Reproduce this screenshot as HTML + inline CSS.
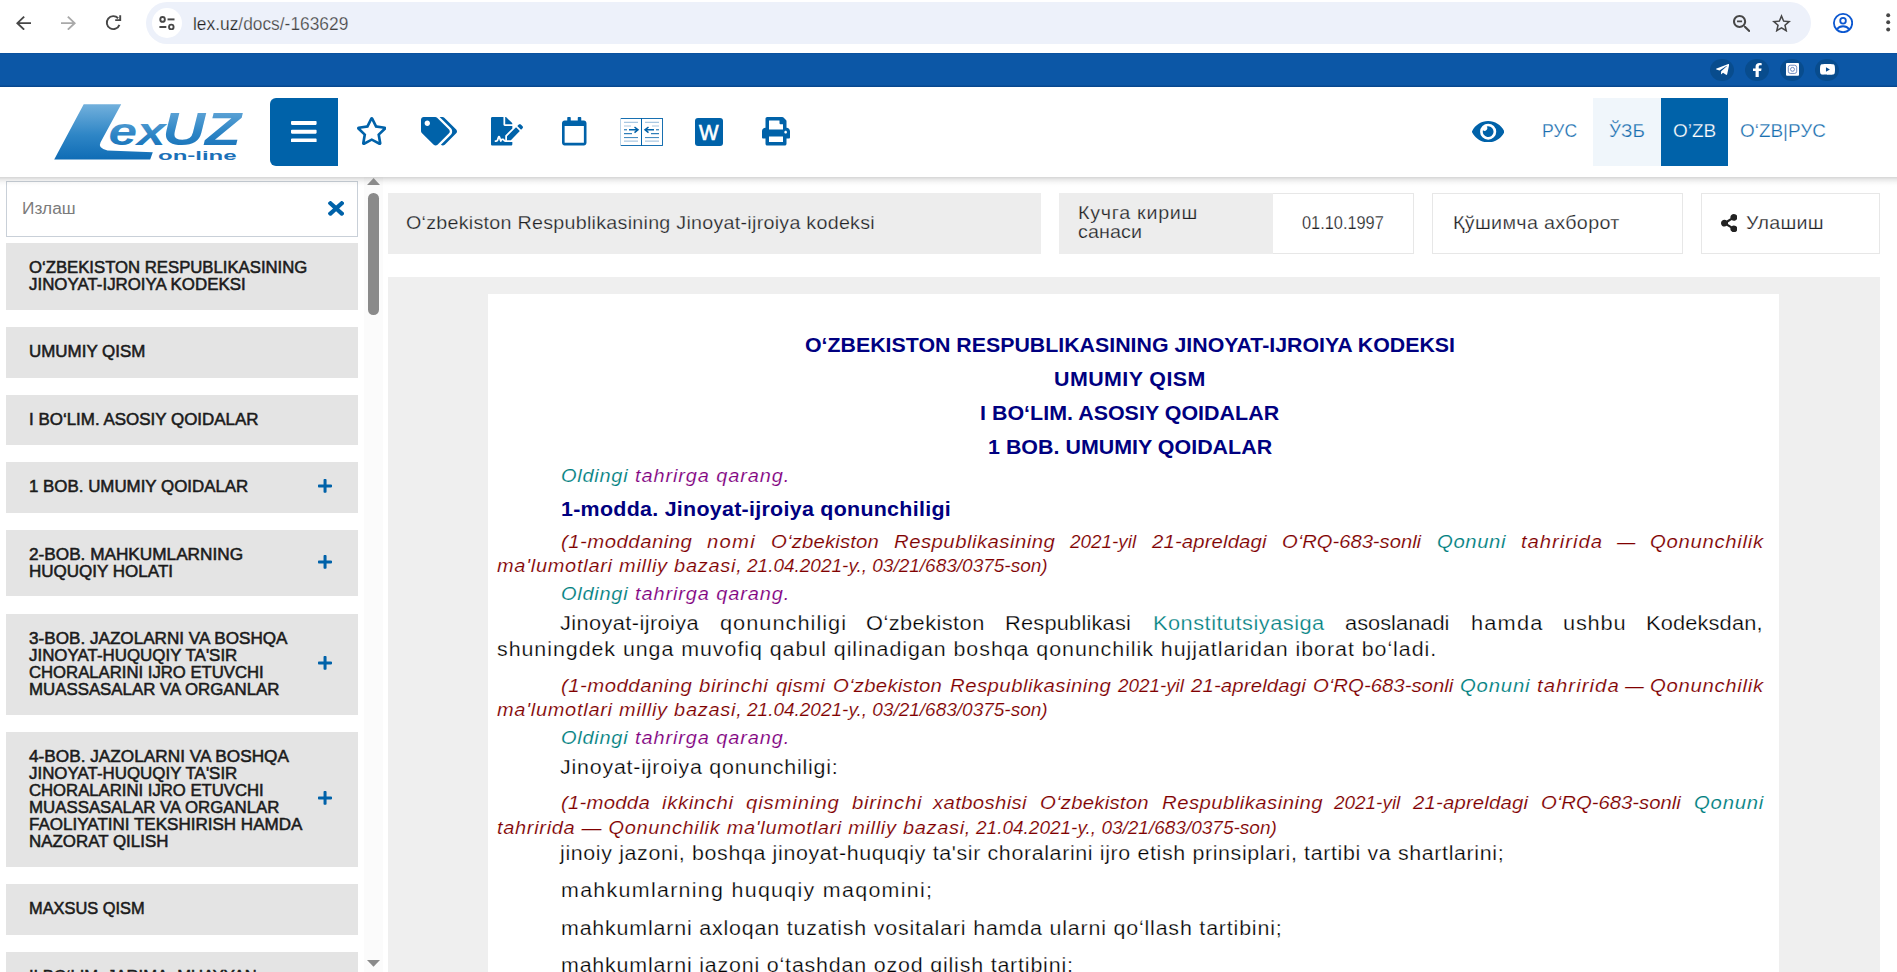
<!DOCTYPE html>
<html lang="uz"><head><meta charset="utf-8"><title>Oʻzbekiston Respublikasining Jinoyat-ijroiya kodeksi</title>
<style>
html,body{margin:0;padding:0;background:#fff;overflow:hidden}
body{width:1897px;height:972px;font-family:"Liberation Sans","DejaVu Sans",sans-serif}
#app{position:relative;width:1897px;height:972px;overflow:hidden;background:#fff}
.a{position:absolute;display:block}
.t{position:absolute;display:block;white-space:pre;transform-origin:0 0;margin:0;padding:0;text-decoration:none}
</style></head><body>
<div id="app">
<div class="browser-chrome">
<div class="a" style="left:0px;top:0px;width:1897px;height:53px;background:#fff;"></div>
<div class="a" style="left:146px;top:2px;width:1664.5px;height:42px;background:#edf1fa;border-radius:21px"></div>
<svg class="a" style="left:16.2px;top:15.5px;width:15px;height:14.3px;" viewBox="4 4 16 16" preserveAspectRatio="none"><path fill="#474747" d="M20 11H7.83l5.59-5.59L12 4l-8 8 8 8 1.41-1.41L7.83 13H20v-2z"/></svg>
<svg class="a" style="left:61.1px;top:15.5px;width:15px;height:14.3px;" viewBox="4 4 16 16" preserveAspectRatio="none"><path fill="#a9a9a9" d="M12 4l-1.41 1.41L16.17 11H4v2h12.17l-5.58 5.59L12 20l8-8z"/></svg>
<svg class="a" style="left:104px;top:13px;width:20px;height:20px;" viewBox="104 13 20 20" preserveAspectRatio="none"><g fill="none" stroke="#474747" stroke-width="1.900"><path d="M118.130 18.250A6.500 6.500 0 1 0 119.410 24.820"/><path d="M120.200 15.300V20.100H115.200"/></g></svg>
<div class="a" style="left:152.2px;top:7.9px;width:30px;height:30px;background:#fff;border-radius:50%"></div>
<svg class="a" style="left:159.3px;top:15.8px;width:15.9px;height:14.4px;" viewBox="0 0 16 14" preserveAspectRatio="none"><g fill="none" stroke="#474747" stroke-width="1.9"><circle cx="3.6" cy="3.3" r="2.3"/><path d="M8.6 3.3H15.6"/><circle cx="12.4" cy="10.7" r="2.3"/><path d="M0.4 10.7H7.4"/></g></svg>
<span class='t' style='left:193px;top:12.00px;font:normal 400 17.8px "Liberation Sans", "DejaVu Sans", sans-serif;letter-spacing:0.0px;-webkit-text-stroke:0.25px #edf1fa;line-height:24px;color:#1f1f1f;transform:scaleX(0.9758)'>lex.uz<span style="color:#424242">/docs/-163629</span></span>
<svg class="a" style="left:1732.8px;top:14.7px;width:17.7px;height:17.4px;" viewBox="3 3 17.5 17.5" preserveAspectRatio="none"><path fill="#474747" d="M15.5 14h-.79l-.28-.27C15.41 12.59 16 11.11 16 9.5 16 5.91 13.09 3 9.5 3S3 5.910 3 9.500 5.910 16 9.500 16c1.610 0 3.090-.590 4.230-1.570l.270.280v.790l5 4.990L20.490 19l-4.990-5zm-6 0C7.010 14 5 11.990 5 9.500S7.010 5 9.500 5 14 7.010 14 9.500 11.990 14 9.500 14zM7 8.600h5v1.800H7z"/></svg>
<svg class="a" style="left:1772px;top:13.6px;width:19px;height:18.3px;" viewBox="2 2 20 19" preserveAspectRatio="none"><path fill="#474747" d="M22 9.24l-7.19-.62L12 2 9.19 8.63 2 9.24l5.46 4.73L5.82 21 12 17.27 18.18 21l-1.63-7.03L22 9.24zM12 15.4l-3.76 2.27 1-4.28-3.32-2.88 4.38-.38L12 6.1l1.71 4.04 4.38.38-3.32 2.88 1 4.28L12 15.4z"/></svg>
<svg class="a" style="left:1833.4px;top:12.5px;width:20.1px;height:20.1px;" viewBox="0 0 20 20" preserveAspectRatio="none"><g fill="none" stroke="#0b57d0" stroke-width="1.8"><circle cx="10" cy="10" r="9.100"/><circle cx="10" cy="7.700" r="2.800"/><path d="M3.900 16.200c1.500-2.100 3.700-3 6.100-3s4.600.900 6.100 3"/></g></svg>
<svg class="a" style="left:1886.3px;top:13px;width:4.4px;height:18.6px;" viewBox="0 0 4.400 18.600" preserveAspectRatio="none"><g fill="#474747"><circle cx="2.200" cy="2.200" r="2"/><circle cx="2.200" cy="9.300" r="2"/><circle cx="2.200" cy="16.400" r="2"/></g></svg>
</div>
<div class="topbar">
<div class="a" style="left:0px;top:53px;width:1897px;height:33.7px;background:linear-gradient(#0a4f9b,#0c57a6 1.500px,#0c57a6 31.700px,#07468c 33.700px);"></div>
<div class="a" style="left:1710px;top:58.9px;width:24px;height:22.2px;background:#084c8d;border-radius:50%"></div>
<div class="a" style="left:1745px;top:58.9px;width:24px;height:22.2px;background:#084c8d;border-radius:50%"></div>
<div class="a" style="left:1780px;top:58.9px;width:24px;height:22.2px;background:#084c8d;border-radius:50%"></div>
<div class="a" style="left:1815px;top:58.9px;width:24px;height:22.2px;background:#084c8d;border-radius:50%"></div>
<svg class="a" style="left:1716px;top:63.9px;width:13.2px;height:11px" viewBox="0.02 64.40 447.96 375.68" preserveAspectRatio="none"><path fill="#fff" d="M446.700 98.600l-67.600 318.800c-5.100 22.500-18.400 28.100-37.300 17.500l-103-75.900-49.700 47.800c-5.500 5.500-10.100 10.100-20.700 10.100l7.400-104.900 190.900-172.500c8.300-7.400-1.800-11.500-12.900-4.100L117.800 284 16.200 252.200c-22.100-6.900-22.500-22.100 4.600-32.700L418.200 66.400c18.400-6.900 34.500 4.100 28.500 32.200z"/></svg>
<svg class="a" style="left:1753px;top:62.8px;width:8.7px;height:14.1px" viewBox="22.89 0.00 274.22 512.00" preserveAspectRatio="none"><path fill="#fff" d="M279.140 288l14.220-92.660h-88.910v-60.130c0-25.350 12.420-50.060 52.240-50.060h40.420V6.260S260.430 0 225.360 0c-73.220 0-121.080 44.380-121.080 124.720v70.620H22.890V288h81.390v224h100.170V288z"/></svg>
<svg class="a" style="left:1785.9px;top:63.3px;width:13px;height:12.7px;" viewBox="0 0 13 13" preserveAspectRatio="none"><rect width="13" height="13" rx="1" fill="#fff"/><rect x="2.300" y="2.300" width="8.400" height="8.400" rx="2.200" fill="none" stroke="#3a5fa8" stroke-width=".7"/><circle cx="6.500" cy="6.500" r="2" fill="none" stroke="#3a5fa8" stroke-width=".7"/></svg>
<svg class="a" style="left:1819.7px;top:64.2px;width:15px;height:10.9px" viewBox="14.93 64.00 546.13 384.00" preserveAspectRatio="none"><path fill="#fff" d="M549.655 124.083c-6.281-23.650-24.787-42.276-48.284-48.597C458.781 64 288 64 288 64S117.220 64 74.629 75.486c-23.497 6.322-42.003 24.947-48.284 48.597-11.412 42.867-11.412 132.305-11.412 132.305s0 89.438 11.412 132.305c6.281 23.650 24.787 41.500 48.284 47.821C117.220 448 288 448 288 448s170.780 0 213.371-11.486c23.497-6.321 42.003-24.171 48.284-47.821 11.412-42.867 11.412-132.305 11.412-132.305s0-89.438-11.412-132.305zm-317.510 213.508V175.185l142.739 81.205-142.739 81.201z"/></svg>
</div>
<header class="site-header">
<div class="a" style="left:0px;top:87px;width:1897px;height:90px;background:#fff;"></div>
<svg class="a" style="left:54px;top:104px;width:190px;height:56px;" viewBox="54 104 190 56" preserveAspectRatio="none"><defs><linearGradient id="lg" x1="0" y1="0" x2="0" y2="1"><stop offset="0" stop-color="#72b0dc"/><stop offset=".55" stop-color="#2f86c6"/><stop offset="1" stop-color="#0f6cb5"/></linearGradient></defs><path fill="url(#lg)" d="M83.700 104.300H121.200L100.600 142.300Q97.300 148.400 107.500 150.400L152.800 152.300 150.200 159.500H54.200Z"/><text x="108.500" y="145.300" font-family="Liberation Sans, sans-serif" font-weight="bold" font-style="italic" font-size="39" fill="url(#lg)" textLength="57" lengthAdjust="spacingAndGlyphs">ex</text> <text x="162.500" y="144.800" font-family="Liberation Sans, sans-serif" font-weight="bold" font-style="italic" font-size="46" fill="url(#lg)" textLength="78.500" lengthAdjust="spacingAndGlyphs">UZ</text> <text x="158" y="159.500" font-family="Liberation Sans, sans-serif" font-weight="bold" font-size="13" fill="#1a70b8" textLength="78.500" lengthAdjust="spacingAndGlyphs">on-line</text></svg>
<div class="a" style="left:270px;top:98px;width:67.6px;height:68px;background:#0062a9;border-radius:6px 0 0 6px"></div>
<svg class="a" style="left:291px;top:120.9px;width:25.6px;height:21.4px" viewBox="0.00 60.00 448.00 392.00" preserveAspectRatio="none"><path fill="#fff" d="M16 132h416c8.837 0 16-7.163 16-16V76c0-8.837-7.163-16-16-16H16C7.163 60 0 67.163 0 76v40c0 8.837 7.163 16 16 16zm0 160h416c8.837 0 16-7.163 16-16v-40c0-8.837-7.163-16-16-16H16c-8.837 0-16 7.163-16 16v40c0 8.837 7.163 16 16 16zm0 160h416c8.837 0 16-7.163 16-16v-40c0-8.837-7.163-16-16-16H16c-8.837 0-16 7.163-16 16v40c0 8.837 7.163 16 16 16z"/></svg>
<svg class="a" style="left:356.7px;top:117.4px;width:29.5px;height:28.1px" viewBox="20.50 -0.01 535.00 512.06" preserveAspectRatio="none"><path fill="#0062a9" d="M528.1 171.5L382 150.2 316.7 17.8c-11.7-23.6-45.6-23.9-57.4 0L194 150.2 47.900 171.500c-26.200 3.800-36.700 36.100-17.700 54.600l105.700 103-25 145.500c-4.500 26.300 23.200 46 46.400 33.700L288 439.600l130.700 68.700c23.200 12.200 50.900-7.400 46.400-33.700l-25-145.500 105.700-103c19-18.500 8.500-50.800-17.700-54.600zM388.600 312.300l23.700 138.400L288 385.400l-124.300 65.300 23.700-138.400-100.600-98 139-20.200 62.200-126 62.200 126 139 20.200-100.600 98z"/></svg>
<svg class="a" style="left:420.9px;top:117px;width:36px;height:28.5px" viewBox="0.00 0.00 640.00 512.00" preserveAspectRatio="none"><path fill="#0062a9" d="M497.941 225.941L286.059 14.059A48 48 0 0 0 252.118 0H48C21.490 0 0 21.490 0 48v204.118a48 48 0 0 0 14.059 33.941l211.882 211.882c18.744 18.745 49.136 18.746 67.882 0l204.118-204.118c18.745-18.745 18.745-49.137 0-67.882zM112 160c-26.510 0-48-21.490-48-48s21.490-48 48-48 48 21.490 48 48-21.490 48-48 48zm513.941 133.823L421.823 497.941c-18.745 18.745-49.137 18.745-67.882 0l-.360-.360L527.640 323.522c16.999-16.999 26.360-39.600 26.360-63.640s-9.362-46.641-26.360-63.640L331.397 0h48.721a48 48 0 0 1 33.941 14.059l211.882 211.882c18.745 18.745 18.745 49.137 0 67.882z"/></svg>
<svg class="a" style="left:490.6px;top:117px;width:32px;height:28.5px" viewBox="0.00 0.00 576.00 512.00" preserveAspectRatio="none"><path fill="#0062a9" d="M218.170 424.140c-2.950-5.920-8.090-6.520-10.170-6.520s-7.220.590-10.020 6.190l-7.670 15.340c-6.370 12.780-25.030 11.370-29.480-2.090L144 386.590l-10.610 31.880c-5.890 17.660-22.380 29.530-41 29.530H80c-8.840 0-16-7.160-16-16s7.160-16 16-16h12.390c4.830 0 9.110-3.080 10.640-7.660l18.190-54.640c3.300-9.810 12.440-16.410 22.780-16.410s19.480 6.590 22.770 16.410l13.880 41.640c19.750-16.190 54.060-9.700 66 14.160 1.890 3.780 5.490 5.950 9.360 6.260v-82.120l128-127.090V160H248c-13.200 0-24-10.800-24-24V0H24C10.700 0 0 10.700 0 24v464c0 13.300 10.700 24 24 24h336c13.300 0 24-10.700 24-24v-40l-128-.110c-16.120-.310-30.580-9.280-37.830-23.750zM384 121.900c0-6.300-2.500-12.400-7-16.900L279.100 7c-4.500-4.500-10.600-7-17-7H256v128h128v-6.100zm-96 225.060V416h68.990l161.680-162.780-67.880-67.880L288 346.960zm280.540-179.630l-31.870-31.870c-9.940-9.940-26.070-9.940-36.010 0l-27.250 27.250 67.880 67.880 27.250-27.250c9.950-9.940 9.950-26.070 0-36.010z"/></svg>
<svg class="a" style="left:562px;top:117px;width:24.5px;height:28.5px" viewBox="0.00 0.00 448.00 512.00" preserveAspectRatio="none"><path fill="#0062a9" d="M400 64h-48V12c0-6.600-5.400-12-12-12h-40c-6.600 0-12 5.400-12 12v52H160V12c0-6.600-5.400-12-12-12h-40c-6.600 0-12 5.400-12 12v52H48C21.500 64 0 85.500 0 112v352c0 26.500 21.500 48 48 48h352c26.500 0 48-21.500 48-48V112c0-26.500-21.500-48-48-48zm-6 400H54c-3.300 0-6-2.700-6-6V160h352v298c0 3.300-2.700 6-6 6z"/></svg>
<svg class="a" style="left:620.4px;top:118px;width:43px;height:28px;" viewBox="0 0 43 28" preserveAspectRatio="none"><rect x=".5" y=".5" width="42" height="27" fill="#fff" stroke="#0062a9" stroke-width=".9"/><path d="M.5 0V28" stroke="#b9d3e8" stroke-width="1"/><path d="M21.500 0V28" stroke="#0062a9" stroke-width="1"/><g stroke="#a9c8e2" stroke-width="1.200"><path d="M4 4.300H18M4 8H11M4 23.200H18"/><path d="M25 4.300H39M32 8H39M25 23.200H39"/></g><g stroke="#0062a9" fill="none"><path stroke-width="1.500" d="M9 11.800H18M14.500 9l3.500 2.800-3.500 2.800"/><path stroke-width="1.500" d="M34 11.800H25M28.500 9l-3.500 2.800 3.500 2.800"/><path d="M4 11.800H7M4 15.700H12M36 11.800H39M31 15.700H39" stroke-width="1"/><path d="M4 19.600H18M25 19.600H39" stroke-width=".8"/></g></svg>
<div class="a" style="left:694.5px;top:118px;width:28.3px;height:27.8px;background:#0062a9;border-radius:3px"></div>
<span class='t' style='left:698.9px;top:117.80px;font:normal 400 21.6px "Liberation Sans", "DejaVu Sans", sans-serif;letter-spacing:0.0px;-webkit-text-stroke:0.6px currentColor;line-height:29px;color:#fff;transform:scaleX(0.9612)'>W</span>
<svg class="a" style="left:762.4px;top:117px;width:28px;height:28.5px" viewBox="0.00 0.00 512.00 512.00" preserveAspectRatio="none"><path fill="#0062a9" d="M448 192V77.250c0-8.490-3.370-16.620-9.370-22.630L393.370 9.370c-6-6-14.140-9.370-22.630-9.370H96C78.330 0 64 14.330 64 32v160c-35.350 0-64 28.650-64 64v112c0 8.840 7.160 16 16 16h48v96c0 17.670 14.330 32 32 32h320c17.670 0 32-14.330 32-32v-96h48c8.840 0 16-7.160 16-16V256c0-35.350-28.650-64-64-64zm-64 256H128v-96h256v96zm0-224H128V64h192v48c0 8.840 7.160 16 16 16h48v96zm48 72c-13.250 0-24-10.750-24-24 0-13.260 10.750-24 24-24s24 10.740 24 24c0 13.250-10.750 24-24 24z"/></svg>
<svg class="a" style="left:1471.6px;top:120.6px;width:32.3px;height:21.4px" viewBox="0.00 64.00 576.00 384.00" preserveAspectRatio="none"><path fill="#0062a9" d="M572.520 241.400C518.290 135.590 410.930 64 288 64S57.680 135.640 3.480 241.410a32.350 32.350 0 0 0 0 29.190C57.710 376.410 165.070 448 288 448s230.320-71.640 284.520-177.410a32.350 32.350 0 0 0 0-29.190zM288 400a144 144 0 1 1 144-144 143.930 143.930 0 0 1-144 144zm0-240a95.310 95.310 0 0 0-25.310 3.790 47.850 47.850 0 0 1-66.900 66.900A95.780 95.780 0 1 0 288 160z"/></svg>
<div class="a" style="left:1592.8px;top:98px;width:68px;height:67.6px;background:#f0f6fb;"></div>
<div class="a" style="left:1660.7px;top:98px;width:67.3px;height:67.6px;background:#0062a9;"></div>
<span class='t' style='left:1542.2px;top:119.00px;font:normal 400 18px "Liberation Sans", "DejaVu Sans", sans-serif;letter-spacing:0.0px;-webkit-text-stroke:0.25px #fff;line-height:24px;color:#1a6fb0;transform:scaleX(0.9765)'>РУС</span>
<span class='t' style='left:1609.3px;top:119.00px;font:normal 400 18px "Liberation Sans", "DejaVu Sans", sans-serif;letter-spacing:0.0px;-webkit-text-stroke:0.25px #f0f6fb;line-height:24px;color:#1a6fb0;transform:scaleX(1.0491)'>ЎЗБ</span>
<span class='t' style='left:1673px;top:119.00px;font:normal 400 18px "Liberation Sans", "DejaVu Sans", sans-serif;letter-spacing:0.0px;-webkit-text-stroke:0.25px #0062a9;line-height:24px;color:#fff;transform:scaleX(1.0533)'>O’ZB</span>
<span class='t' style='left:1740.4px;top:119.00px;font:normal 400 18px "Liberation Sans", "DejaVu Sans", sans-serif;letter-spacing:0.0px;-webkit-text-stroke:0.25px #fff;line-height:24px;color:#1a6fb0;transform:scaleX(1.0510)'>OʻZB|РУС</span>
</header>
<aside class="toc">
<div class="a" style="left:5.9px;top:181.2px;width:351.9px;height:55.4px;background:#fff;box-sizing:border-box;border:1px solid #c9d0d8"></div>
<span class='t' style='left:21.7px;top:196.00px;font:normal 400 17.3px "Liberation Sans", "DejaVu Sans", sans-serif;letter-spacing:0.0px;line-height:24px;color:#7b7b7b;transform:scaleX(0.9978)'>Излаш</span>
<svg class="a" style="left:327.5px;top:201px;width:16.2px;height:14.8px" viewBox="0.00 80.00 352.00 352.00" preserveAspectRatio="none"><path fill="#0062a9" d="M242.720 256l100.070-100.070c12.280-12.280 12.280-32.190 0-44.480l-22.240-22.240c-12.280-12.280-32.190-12.280-44.480 0L176 189.280 75.930 89.210c-12.280-12.280-32.190-12.280-44.480 0L9.210 111.450c-12.280 12.280-12.280 32.190 0 44.480L109.280 256 9.210 356.070c-12.280 12.280-12.280 32.190 0 44.480l22.240 22.240c12.280 12.280 32.200 12.280 44.480 0L176 322.720l100.070 100.070c12.280 12.280 32.200 12.280 44.480 0l22.240-22.240c12.280-12.280 12.280-32.190 0-44.480L242.720 256z"/></svg>
<div class="a" style="left:364px;top:177px;width:19px;height:795px;background:#fbfbfb;"></div>
<svg class="a" style="left:367px;top:960px;width:13px;height:6.8px;" viewBox="0 0 13 6.800" preserveAspectRatio="none"><path d="M6.500 6.800L13 0H0z" fill="#8a8a8a"/></svg>
<div class="a" style="left:368.4px;top:192.8px;width:10.6px;height:122.2px;background:#8a8a8a;border-radius:5.300px"></div>
<div class="a" style="left:5.9px;top:243.2px;width:351.9px;height:66.5px;background:#e4e4e4;"></div>
<span class='t' style='left:28.9px;top:256.00px;font:normal 400 17px "Liberation Sans", "DejaVu Sans", sans-serif;letter-spacing:0.0px;-webkit-text-stroke:0.55px currentColor;line-height:23px;color:#1b1b1b;transform:scaleX(0.9831)'>OʻZBEKISTON RESPUBLIKASINING</span>
<span class='t' style='left:28.9px;top:273.00px;font:normal 400 17px "Liberation Sans", "DejaVu Sans", sans-serif;letter-spacing:0.0px;-webkit-text-stroke:0.55px currentColor;line-height:23px;color:#1b1b1b;transform:scaleX(0.9926)'>JINOYAT-IJROIYA KODEKSI</span>
<div class="a" style="left:5.9px;top:327px;width:351.9px;height:50.60000000000002px;background:#e4e4e4;"></div>
<span class='t' style='left:28.9px;top:340.00px;font:normal 400 17px "Liberation Sans", "DejaVu Sans", sans-serif;letter-spacing:0.0px;-webkit-text-stroke:0.55px currentColor;line-height:23px;color:#1b1b1b;transform:scaleX(0.9965)'>UMUMIY QISM</span>
<div class="a" style="left:5.9px;top:395.1px;width:351.9px;height:49.799999999999955px;background:#e4e4e4;"></div>
<span class='t' style='left:28.9px;top:408.00px;font:normal 400 17px "Liberation Sans", "DejaVu Sans", sans-serif;letter-spacing:0.0px;-webkit-text-stroke:0.55px currentColor;line-height:23px;color:#1b1b1b;transform:scaleX(0.9973)'>I BOʻLIM. ASOSIY QOIDALAR</span>
<div class="a" style="left:5.9px;top:462px;width:351.9px;height:50.60000000000002px;background:#e4e4e4;"></div>
<span class='t' style='left:28.9px;top:475.00px;font:normal 400 17px "Liberation Sans", "DejaVu Sans", sans-serif;letter-spacing:0.0px;-webkit-text-stroke:0.55px currentColor;line-height:23px;color:#1b1b1b;transform:scaleX(0.9935)'>1 BOB. UMUMIY QOIDALAR</span>
<svg class="a" style="left:318px;top:479.40000000000003px;width:14.1px;height:13.8px" viewBox="0.00 32.00 448.00 448.00" preserveAspectRatio="none"><path fill="#0062a9" d="M416 208H272V64c0-17.670-14.330-32-32-32h-32c-17.670 0-32 14.330-32 32v144H32c-17.670 0-32 14.330-32 32v32c0 17.670 14.330 32 32 32h144v144c0 17.670 14.330 32 32 32h32c17.670 0 32-14.330 32-32V304h144c17.670 0 32-14.330 32-32v-32c0-17.670-14.330-32-32-32z"/></svg>
<div class="a" style="left:5.9px;top:530.1px;width:351.9px;height:66.39999999999998px;background:#e4e4e4;"></div>
<span class='t' style='left:28.9px;top:543.00px;font:normal 400 17px "Liberation Sans", "DejaVu Sans", sans-serif;letter-spacing:0.0px;-webkit-text-stroke:0.55px currentColor;line-height:23px;color:#1b1b1b;transform:scaleX(1.0114)'>2-BOB. MAHKUMLARNING</span>
<span class='t' style='left:28.9px;top:560.00px;font:normal 400 17px "Liberation Sans", "DejaVu Sans", sans-serif;letter-spacing:0.0px;-webkit-text-stroke:0.55px currentColor;line-height:23px;color:#1b1b1b;transform:scaleX(1.0007)'>HUQUQIY HOLATI</span>
<svg class="a" style="left:318px;top:554.9px;width:14.1px;height:13.8px" viewBox="0.00 32.00 448.00 448.00" preserveAspectRatio="none"><path fill="#0062a9" d="M416 208H272V64c0-17.670-14.330-32-32-32h-32c-17.670 0-32 14.330-32 32v144H32c-17.670 0-32 14.330-32 32v32c0 17.670 14.330 32 32 32h144v144c0 17.670 14.330 32 32 32h32c17.670 0 32-14.330 32-32V304h144c17.670 0 32-14.330 32-32v-32c0-17.670-14.330-32-32-32z"/></svg>
<div class="a" style="left:5.9px;top:614.1px;width:351.9px;height:100.60000000000002px;background:#e4e4e4;"></div>
<span class='t' style='left:28.9px;top:627.00px;font:normal 400 17px "Liberation Sans", "DejaVu Sans", sans-serif;letter-spacing:0.0px;-webkit-text-stroke:0.55px currentColor;line-height:23px;color:#1b1b1b;transform:scaleX(1.0072)'>3-BOB. JAZOLARNI VA BOSHQA</span>
<span class='t' style='left:28.9px;top:644.00px;font:normal 400 17px "Liberation Sans", "DejaVu Sans", sans-serif;letter-spacing:0.0px;-webkit-text-stroke:0.55px currentColor;line-height:23px;color:#1b1b1b;transform:scaleX(0.9943)'>JINOYAT-HUQUQIY TA'SIR</span>
<span class='t' style='left:28.9px;top:661.00px;font:normal 400 17px "Liberation Sans", "DejaVu Sans", sans-serif;letter-spacing:0.0px;-webkit-text-stroke:0.55px currentColor;line-height:23px;color:#1b1b1b;transform:scaleX(0.9821)'>CHORALARINI IJRO ETUVCHI</span>
<span class='t' style='left:28.9px;top:678.00px;font:normal 400 17px "Liberation Sans", "DejaVu Sans", sans-serif;letter-spacing:0.0px;-webkit-text-stroke:0.55px currentColor;line-height:23px;color:#1b1b1b;transform:scaleX(0.9906)'>MUASSASALAR VA ORGANLAR</span>
<svg class="a" style="left:318px;top:656.4px;width:14.1px;height:13.8px" viewBox="0.00 32.00 448.00 448.00" preserveAspectRatio="none"><path fill="#0062a9" d="M416 208H272V64c0-17.670-14.330-32-32-32h-32c-17.670 0-32 14.330-32 32v144H32c-17.670 0-32 14.330-32 32v32c0 17.670 14.330 32 32 32h144v144c0 17.670 14.330 32 32 32h32c17.670 0 32-14.330 32-32V304h144c17.670 0 32-14.330 32-32v-32c0-17.670-14.330-32-32-32z"/></svg>
<div class="a" style="left:5.9px;top:732px;width:351.9px;height:134.70000000000005px;background:#e4e4e4;"></div>
<span class='t' style='left:28.9px;top:745.00px;font:normal 400 17px "Liberation Sans", "DejaVu Sans", sans-serif;letter-spacing:0.0px;-webkit-text-stroke:0.55px currentColor;line-height:23px;color:#1b1b1b;transform:scaleX(1.0130)'>4-BOB. JAZOLARNI VA BOSHQA</span>
<span class='t' style='left:28.9px;top:762.00px;font:normal 400 17px "Liberation Sans", "DejaVu Sans", sans-serif;letter-spacing:0.0px;-webkit-text-stroke:0.55px currentColor;line-height:23px;color:#1b1b1b;transform:scaleX(0.9943)'>JINOYAT-HUQUQIY TA'SIR</span>
<span class='t' style='left:28.9px;top:779.00px;font:normal 400 17px "Liberation Sans", "DejaVu Sans", sans-serif;letter-spacing:0.0px;-webkit-text-stroke:0.55px currentColor;line-height:23px;color:#1b1b1b;transform:scaleX(0.9821)'>CHORALARINI IJRO ETUVCHI</span>
<span class='t' style='left:28.9px;top:796.00px;font:normal 400 17px "Liberation Sans", "DejaVu Sans", sans-serif;letter-spacing:0.0px;-webkit-text-stroke:0.55px currentColor;line-height:23px;color:#1b1b1b;transform:scaleX(0.9906)'>MUASSASALAR VA ORGANLAR</span>
<span class='t' style='left:28.9px;top:813.00px;font:normal 400 17px "Liberation Sans", "DejaVu Sans", sans-serif;letter-spacing:0.0px;-webkit-text-stroke:0.55px currentColor;line-height:23px;color:#1b1b1b;transform:scaleX(1.0011)'>FAOLIYATINI TEKSHIRISH HAMDA</span>
<span class='t' style='left:28.9px;top:830.00px;font:normal 400 17px "Liberation Sans", "DejaVu Sans", sans-serif;letter-spacing:0.0px;-webkit-text-stroke:0.55px currentColor;line-height:23px;color:#1b1b1b;transform:scaleX(0.9948)'>NAZORAT QILISH</span>
<svg class="a" style="left:318px;top:791.1px;width:14.1px;height:13.8px" viewBox="0.00 32.00 448.00 448.00" preserveAspectRatio="none"><path fill="#0062a9" d="M416 208H272V64c0-17.670-14.330-32-32-32h-32c-17.670 0-32 14.330-32 32v144H32c-17.670 0-32 14.330-32 32v32c0 17.670 14.330 32 32 32h144v144c0 17.670 14.330 32 32 32h32c17.670 0 32-14.330 32-32V304h144c17.670 0 32-14.330 32-32v-32c0-17.670-14.330-32-32-32z"/></svg>
<div class="a" style="left:5.9px;top:884.1px;width:351.9px;height:50.60000000000002px;background:#e4e4e4;"></div>
<span class='t' style='left:28.9px;top:897.00px;font:normal 400 17px "Liberation Sans", "DejaVu Sans", sans-serif;letter-spacing:0.0px;-webkit-text-stroke:0.55px currentColor;line-height:23px;color:#1b1b1b;transform:scaleX(0.9636)'>MAXSUS QISM</span>
<div class="a" style="left:5.9px;top:952.2px;width:351.9px;height:47.799999999999955px;background:#e4e4e4;"></div>
<span class='t' style='left:28.9px;top:965.00px;font:normal 400 17px "Liberation Sans", "DejaVu Sans", sans-serif;letter-spacing:0.0px;-webkit-text-stroke:0.55px currentColor;line-height:23px;color:#1b1b1b;transform:scaleX(0.9746)'>II BOʻLIM. JARIMA, MUAYYAN</span>
</aside>
<section class="doc-info">
<div class="a" style="left:388px;top:192.8px;width:652.7px;height:60.9px;background:#ededed;"></div>
<span class='t' style='left:405.8px;top:210.00px;font:normal 400 18.4px "Liberation Sans", "DejaVu Sans", sans-serif;letter-spacing:0.251px;-webkit-text-stroke:0.25px #ededed;line-height:25px;color:#202124;transform:scaleX(1.0700)'>Oʻzbekiston Respublikasining Jinoyat-ijroiya kodeksi</span>
<div class="a" style="left:1059px;top:192.8px;width:214px;height:60.9px;background:#ededed;"></div>
<span class='t' style='left:1078.4px;top:199.90px;font:normal 400 18.4px "Liberation Sans", "DejaVu Sans", sans-serif;letter-spacing:0.687px;-webkit-text-stroke:0.25px #ededed;line-height:25px;color:#202124;transform:scaleX(1.0700)'>Кучга кириш</span>
<span class='t' style='left:1078.4px;top:218.90px;font:normal 400 18.4px "Liberation Sans", "DejaVu Sans", sans-serif;letter-spacing:0.106px;-webkit-text-stroke:0.25px #ededed;line-height:25px;color:#202124;transform:scaleX(1.0700)'>санаси</span>
<div class="a" style="left:1273px;top:192.8px;width:140.7px;height:60.9px;background:#fff;box-sizing:border-box;border:1px solid #e7e7e7;border-left:0"></div>
<span class='t' style='left:1301.9px;top:210.00px;font:normal 400 18.4px "Liberation Sans", "DejaVu Sans", sans-serif;letter-spacing:0.0px;-webkit-text-stroke:0.25px #fff;line-height:25px;color:#202124;transform:scaleX(0.8887)'>01.10.1997</span>
<div class="a" style="left:1432px;top:192.8px;width:251px;height:60.9px;background:#fff;box-sizing:border-box;border:1px solid #e7e7e7"></div>
<span class='t' style='left:1453.2px;top:210.00px;font:normal 400 18.4px "Liberation Sans", "DejaVu Sans", sans-serif;letter-spacing:0.319px;-webkit-text-stroke:0.25px #fff;line-height:25px;color:#202124;transform:scaleX(1.0700)'>Қўшимча ахборот</span>
<div class="a" style="left:1701.3px;top:192.8px;width:178.7px;height:60.9px;background:#fff;box-sizing:border-box;border:1px solid #e7e7e7"></div>
<svg class="a" style="left:1721px;top:214px;width:16.4px;height:18.3px" viewBox="0.00 0.00 448.00 512.00" preserveAspectRatio="none"><path fill="#222" d="M352 320c-22.608 0-43.387 7.819-59.790 20.895l-102.486-64.054a96.551 96.551 0 0 0 0-41.683l102.486-64.054C308.613 184.181 329.392 192 352 192c53.019 0 96-42.981 96-96S405.019 0 352 0s-96 42.981-96 96c0 7.158.790 14.130 2.276 20.841L155.790 180.895C139.387 167.819 118.608 160 96 160c-53.019 0-96 42.981-96 96s42.981 96 96 96c22.608 0 43.387-7.819 59.790-20.895l102.486 64.054A96.301 96.301 0 0 0 256 416c0 53.019 42.981 96 96 96s96-42.981 96-96-42.981-96-96-96z"/></svg>
<span class='t' style='left:1746.3px;top:210.00px;font:normal 400 18.4px "Liberation Sans", "DejaVu Sans", sans-serif;letter-spacing:0.264px;-webkit-text-stroke:0.25px #fff;line-height:25px;color:#202124;transform:scaleX(1.0700)'>Улашиш</span>
</section>
<main class="doc">
<div class="a" style="left:388px;top:277px;width:1492px;height:700px;background:#efefef;"></div>
<div class="a" style="left:488px;top:294px;width:1291px;height:700px;background:#fff;"></div>
<h1 class='t' style='left:804.7px;top:332.00px;font:normal 700 20px "Liberation Sans", "DejaVu Sans", sans-serif;letter-spacing:0.0px;line-height:26px;color:#000080;transform:scaleX(1.0667)'>OʻZBEKISTON RESPUBLIKASINING JINOYAT-IJROIYA KODEKSI</h1>
<h2 class='t' style='left:1054.1px;top:366.00px;font:normal 700 20px "Liberation Sans", "DejaVu Sans", sans-serif;letter-spacing:0.398px;line-height:26px;color:#000080;transform:scaleX(1.0700)'>UMUMIY QISM</h2>
<h2 class='t' style='left:980.3px;top:400.00px;font:normal 700 20px "Liberation Sans", "DejaVu Sans", sans-serif;letter-spacing:0.026px;line-height:26px;color:#000080;transform:scaleX(1.0700)'>I BOʻLIM. ASOSIY QOIDALAR</h2>
<h2 class='t' style='left:987.7px;top:434.00px;font:normal 700 20px "Liberation Sans", "DejaVu Sans", sans-serif;letter-spacing:0.015px;line-height:26px;color:#000080;transform:scaleX(1.0700)'>1 BOB. UMUMIY QOIDALAR</h2>
<a class='t' style='left:561.2px;top:463.00px;font:italic 400 18.67px "Liberation Sans", "DejaVu Sans", sans-serif;letter-spacing:0.694px;-webkit-text-stroke:0.15px #fff;line-height:25px;color:#008080;transform:scaleX(1.0700)'>Oldingi </a>
<span class='t' style='left:634.5px;top:463.00px;font:italic 400 18.67px "Liberation Sans", "DejaVu Sans", sans-serif;letter-spacing:0.839px;-webkit-text-stroke:0.15px #fff;line-height:25px;color:#800080;transform:scaleX(1.0700)'>tahrirga qarang.</span>
<h3 class='t' style='left:560.7px;top:496.00px;font:normal 700 20px "Liberation Sans", "DejaVu Sans", sans-serif;letter-spacing:0.27px;line-height:26px;color:#000080;transform:scaleX(1.0700)'>1-modda. Jinoyat-ijroiya qonunchiligi</h3>
<span class='t' style='left:560.7px;top:529.00px;font:italic 400 18.67px "Liberation Sans", "DejaVu Sans", sans-serif;letter-spacing:0.452px;-webkit-text-stroke:0.15px #fff;line-height:25px;color:#800000;transform:scaleX(1.0900)'>(1-moddaning </span>
<span class='t' style='left:707.2px;top:529.00px;font:italic 400 18.67px "Liberation Sans", "DejaVu Sans", sans-serif;letter-spacing:1.108px;-webkit-text-stroke:0.15px #fff;line-height:25px;color:#800000;transform:scaleX(1.0900)'>nomi </span>
<span class='t' style='left:770.5px;top:529.00px;font:italic 400 18.67px "Liberation Sans", "DejaVu Sans", sans-serif;letter-spacing:0.151px;-webkit-text-stroke:0.15px #fff;line-height:25px;color:#800000;transform:scaleX(1.0900)'>Oʻzbekiston </span>
<span class='t' style='left:894px;top:529.00px;font:italic 400 18.67px "Liberation Sans", "DejaVu Sans", sans-serif;letter-spacing:0.432px;-webkit-text-stroke:0.15px #fff;line-height:25px;color:#800000;transform:scaleX(1.0900)'>Respublikasining </span>
<span class='t' style='left:1069.8px;top:529.00px;font:italic 400 18.67px "Liberation Sans", "DejaVu Sans", sans-serif;letter-spacing:0.0px;-webkit-text-stroke:0.15px #fff;line-height:25px;color:#800000;transform:scaleX(1.0116)'>2021-yil </span>
<span class='t' style='left:1151.5px;top:529.00px;font:italic 400 18.67px "Liberation Sans", "DejaVu Sans", sans-serif;letter-spacing:0.119px;-webkit-text-stroke:0.15px #fff;line-height:25px;color:#800000;transform:scaleX(1.0900)'>21-apreldagi </span>
<span class='t' style='left:1282px;top:529.00px;font:italic 400 18.67px "Liberation Sans", "DejaVu Sans", sans-serif;letter-spacing:0.0px;-webkit-text-stroke:0.15px #fff;line-height:25px;color:#800000;transform:scaleX(1.0820)'>OʻRQ-683-sonli </span>
<a class='t' style='left:1436.8px;top:529.00px;font:italic 400 18.67px "Liberation Sans", "DejaVu Sans", sans-serif;letter-spacing:0.534px;-webkit-text-stroke:0.15px #fff;line-height:25px;color:#008080;transform:scaleX(1.0900)'>Qonuni </a>
<span class='t' style='left:1521px;top:529.00px;font:italic 400 18.67px "Liberation Sans", "DejaVu Sans", sans-serif;letter-spacing:0.863px;-webkit-text-stroke:0.15px #fff;line-height:25px;color:#800000;transform:scaleX(1.0900)'>tahririda </span>
<span class='t' style='left:1616.7px;top:529.00px;font:italic 400 18.67px "Liberation Sans", "DejaVu Sans", sans-serif;letter-spacing:0.0px;-webkit-text-stroke:0.15px #fff;line-height:25px;color:#800000;transform:scaleX(0.9809)'>— </span>
<span class='t' style='left:1649.7px;top:529.00px;font:italic 400 18.67px "Liberation Sans", "DejaVu Sans", sans-serif;letter-spacing:0.628px;-webkit-text-stroke:0.15px #fff;line-height:25px;color:#800000;transform:scaleX(1.0900)'>Qonunchilik </span>
<span class='t' style='left:497.3px;top:553.00px;font:italic 400 18.67px "Liberation Sans", "DejaVu Sans", sans-serif;letter-spacing:0.684px;-webkit-text-stroke:0.15px #fff;line-height:25px;color:#800000;transform:scaleX(1.0700)'>ma'lumotlari milliy bazasi,</span>
<span class='t' style='left:747.2px;top:553.00px;font:italic 400 18.67px "Liberation Sans", "DejaVu Sans", sans-serif;letter-spacing:0.0px;-webkit-text-stroke:0.15px #fff;line-height:25px;color:#800000;transform:scaleX(1.0181)'>21.04.2021-y., 03/21/683/0375-son)</span>
<a class='t' style='left:561.2px;top:581.00px;font:italic 400 18.67px "Liberation Sans", "DejaVu Sans", sans-serif;letter-spacing:0.694px;-webkit-text-stroke:0.15px #fff;line-height:25px;color:#008080;transform:scaleX(1.0700)'>Oldingi </a>
<span class='t' style='left:634.5px;top:581.00px;font:italic 400 18.67px "Liberation Sans", "DejaVu Sans", sans-serif;letter-spacing:0.839px;-webkit-text-stroke:0.15px #fff;line-height:25px;color:#800080;transform:scaleX(1.0700)'>tahrirga qarang.</span>
<span class='t' style='left:559.8px;top:610.00px;font:normal 400 20px "Liberation Sans", "DejaVu Sans", sans-serif;letter-spacing:0.356px;-webkit-text-stroke:0.25px #fff;line-height:26px;color:#000;transform:scaleX(1.0900)'>Jinoyat-ijroiya </span>
<span class='t' style='left:720px;top:610.00px;font:normal 400 20px "Liberation Sans", "DejaVu Sans", sans-serif;letter-spacing:0.905px;-webkit-text-stroke:0.25px #fff;line-height:26px;color:#000;transform:scaleX(1.0900)'>qonunchiligi </span>
<span class='t' style='left:866.2px;top:610.00px;font:normal 400 20px "Liberation Sans", "DejaVu Sans", sans-serif;letter-spacing:0.403px;-webkit-text-stroke:0.25px #fff;line-height:26px;color:#000;transform:scaleX(1.0900)'>Oʻzbekiston </span>
<span class='t' style='left:1005.4px;top:610.00px;font:normal 400 20px "Liberation Sans", "DejaVu Sans", sans-serif;letter-spacing:0.192px;-webkit-text-stroke:0.25px #fff;line-height:26px;color:#000;transform:scaleX(1.0900)'>Respublikasi </span>
<a class='t' style='left:1153.2px;top:610.00px;font:normal 400 20px "Liberation Sans", "DejaVu Sans", sans-serif;letter-spacing:0.437px;-webkit-text-stroke:0.25px #fff;line-height:26px;color:#008080;transform:scaleX(1.0900)'>Konstitutsiyasiga </a>
<span class='t' style='left:1345.3px;top:610.00px;font:normal 400 20px "Liberation Sans", "DejaVu Sans", sans-serif;letter-spacing:0.017px;-webkit-text-stroke:0.25px #fff;line-height:26px;color:#000;transform:scaleX(1.0900)'>asoslanadi </span>
<span class='t' style='left:1470.5px;top:610.00px;font:normal 400 20px "Liberation Sans", "DejaVu Sans", sans-serif;letter-spacing:1.087px;-webkit-text-stroke:0.25px #fff;line-height:26px;color:#000;transform:scaleX(1.0900)'>hamda </span>
<span class='t' style='left:1562.8px;top:610.00px;font:normal 400 20px "Liberation Sans", "DejaVu Sans", sans-serif;letter-spacing:0.733px;-webkit-text-stroke:0.25px #fff;line-height:26px;color:#000;transform:scaleX(1.0900)'>ushbu </span>
<span class='t' style='left:1646.3px;top:610.00px;font:normal 400 20px "Liberation Sans", "DejaVu Sans", sans-serif;letter-spacing:0.138px;-webkit-text-stroke:0.25px #fff;line-height:26px;color:#000;transform:scaleX(1.0900)'>Kodeksdan, </span>
<span class='t' style='left:497.3px;top:636.00px;font:normal 400 20px "Liberation Sans", "DejaVu Sans", sans-serif;letter-spacing:0.892px;-webkit-text-stroke:0.25px #fff;line-height:26px;color:#000;transform:scaleX(1.0700)'>shuningdek unga muvofiq qabul qilinadigan boshqa qonunchilik hujjatlaridan iborat boʻladi.</span>
<span class='t' style='left:560.7px;top:673.00px;font:italic 400 18.67px "Liberation Sans", "DejaVu Sans", sans-serif;letter-spacing:0.452px;-webkit-text-stroke:0.15px #fff;line-height:25px;color:#800000;transform:scaleX(1.0900)'>(1-moddaning </span>
<span class='t' style='left:699.2px;top:673.00px;font:italic 400 18.67px "Liberation Sans", "DejaVu Sans", sans-serif;letter-spacing:0.586px;-webkit-text-stroke:0.15px #fff;line-height:25px;color:#800000;transform:scaleX(1.0900)'>birinchi </span>
<span class='t' style='left:775.8px;top:673.00px;font:italic 400 18.67px "Liberation Sans", "DejaVu Sans", sans-serif;letter-spacing:0.283px;-webkit-text-stroke:0.15px #fff;line-height:25px;color:#800000;transform:scaleX(1.0900)'>qismi </span>
<span class='t' style='left:833.2px;top:673.00px;font:italic 400 18.67px "Liberation Sans", "DejaVu Sans", sans-serif;letter-spacing:0.233px;-webkit-text-stroke:0.15px #fff;line-height:25px;color:#800000;transform:scaleX(1.0900)'>Oʻzbekiston </span>
<span class='t' style='left:949.7px;top:673.00px;font:italic 400 18.67px "Liberation Sans", "DejaVu Sans", sans-serif;letter-spacing:0.432px;-webkit-text-stroke:0.15px #fff;line-height:25px;color:#800000;transform:scaleX(1.0900)'>Respublikasining </span>
<span class='t' style='left:1118px;top:673.00px;font:italic 400 18.67px "Liberation Sans", "DejaVu Sans", sans-serif;letter-spacing:0.0px;-webkit-text-stroke:0.15px #fff;line-height:25px;color:#800000;transform:scaleX(1.0100)'>2021-yil </span>
<span class='t' style='left:1190.5px;top:673.00px;font:italic 400 18.67px "Liberation Sans", "DejaVu Sans", sans-serif;letter-spacing:0.144px;-webkit-text-stroke:0.15px #fff;line-height:25px;color:#800000;transform:scaleX(1.0900)'>21-apreldagi </span>
<span class='t' style='left:1312.9px;top:673.00px;font:italic 400 18.67px "Liberation Sans", "DejaVu Sans", sans-serif;letter-spacing:0.012px;-webkit-text-stroke:0.15px #fff;line-height:25px;color:#800000;transform:scaleX(1.0900)'>OʻRQ-683-sonli </span>
<a class='t' style='left:1460.1px;top:673.00px;font:italic 400 18.67px "Liberation Sans", "DejaVu Sans", sans-serif;letter-spacing:0.736px;-webkit-text-stroke:0.15px #fff;line-height:25px;color:#008080;transform:scaleX(1.0900)'>Qonuni </a>
<span class='t' style='left:1536.7px;top:673.00px;font:italic 400 18.67px "Liberation Sans", "DejaVu Sans", sans-serif;letter-spacing:0.943px;-webkit-text-stroke:0.15px #fff;line-height:25px;color:#800000;transform:scaleX(1.0900)'>tahririda </span>
<span class='t' style='left:1624.7px;top:673.00px;font:italic 400 18.67px "Liberation Sans", "DejaVu Sans", sans-serif;letter-spacing:0.0px;-webkit-text-stroke:0.15px #fff;line-height:25px;color:#800000;transform:scaleX(1.0077)'>— </span>
<span class='t' style='left:1649.7px;top:673.00px;font:italic 400 18.67px "Liberation Sans", "DejaVu Sans", sans-serif;letter-spacing:0.628px;-webkit-text-stroke:0.15px #fff;line-height:25px;color:#800000;transform:scaleX(1.0900)'>Qonunchilik </span>
<span class='t' style='left:497.3px;top:697.00px;font:italic 400 18.67px "Liberation Sans", "DejaVu Sans", sans-serif;letter-spacing:0.684px;-webkit-text-stroke:0.15px #fff;line-height:25px;color:#800000;transform:scaleX(1.0700)'>ma'lumotlari milliy bazasi,</span>
<span class='t' style='left:747.2px;top:697.00px;font:italic 400 18.67px "Liberation Sans", "DejaVu Sans", sans-serif;letter-spacing:0.0px;-webkit-text-stroke:0.15px #fff;line-height:25px;color:#800000;transform:scaleX(1.0181)'>21.04.2021-y., 03/21/683/0375-son)</span>
<a class='t' style='left:561.2px;top:725.00px;font:italic 400 18.67px "Liberation Sans", "DejaVu Sans", sans-serif;letter-spacing:0.694px;-webkit-text-stroke:0.15px #fff;line-height:25px;color:#008080;transform:scaleX(1.0700)'>Oldingi </a>
<span class='t' style='left:634.5px;top:725.00px;font:italic 400 18.67px "Liberation Sans", "DejaVu Sans", sans-serif;letter-spacing:0.839px;-webkit-text-stroke:0.15px #fff;line-height:25px;color:#800080;transform:scaleX(1.0700)'>tahrirga qarang.</span>
<span class='t' style='left:559.6px;top:754.00px;font:normal 400 20px "Liberation Sans", "DejaVu Sans", sans-serif;letter-spacing:0.736px;-webkit-text-stroke:0.25px #fff;line-height:26px;color:#000;transform:scaleX(1.0700)'>Jinoyat-ijroiya qonunchiligi:</span>
<span class='t' style='left:560.7px;top:790.00px;font:italic 400 18.67px "Liberation Sans", "DejaVu Sans", sans-serif;letter-spacing:0.217px;-webkit-text-stroke:0.15px #fff;line-height:25px;color:#800000;transform:scaleX(1.0900)'>(1-modda </span>
<span class='t' style='left:662px;top:790.00px;font:italic 400 18.67px "Liberation Sans", "DejaVu Sans", sans-serif;letter-spacing:0.567px;-webkit-text-stroke:0.15px #fff;line-height:25px;color:#800000;transform:scaleX(1.0900)'>ikkinchi </span>
<span class='t' style='left:745.5px;top:790.00px;font:italic 400 18.67px "Liberation Sans", "DejaVu Sans", sans-serif;letter-spacing:0.802px;-webkit-text-stroke:0.15px #fff;line-height:25px;color:#800000;transform:scaleX(1.0900)'>qismining </span>
<span class='t' style='left:851.6px;top:790.00px;font:italic 400 18.67px "Liberation Sans", "DejaVu Sans", sans-serif;letter-spacing:0.678px;-webkit-text-stroke:0.15px #fff;line-height:25px;color:#800000;transform:scaleX(1.0900)'>birinchi </span>
<span class='t' style='left:933.4px;top:790.00px;font:italic 400 18.67px "Liberation Sans", "DejaVu Sans", sans-serif;letter-spacing:0.323px;-webkit-text-stroke:0.15px #fff;line-height:25px;color:#800000;transform:scaleX(1.0900)'>xatboshisi </span>
<span class='t' style='left:1040.2px;top:790.00px;font:italic 400 18.67px "Liberation Sans", "DejaVu Sans", sans-serif;letter-spacing:0.206px;-webkit-text-stroke:0.15px #fff;line-height:25px;color:#800000;transform:scaleX(1.0900)'>Oʻzbekiston </span>
<span class='t' style='left:1161.9px;top:790.00px;font:italic 400 18.67px "Liberation Sans", "DejaVu Sans", sans-serif;letter-spacing:0.413px;-webkit-text-stroke:0.15px #fff;line-height:25px;color:#800000;transform:scaleX(1.0900)'>Respublikasining </span>
<span class='t' style='left:1334.3px;top:790.00px;font:italic 400 18.67px "Liberation Sans", "DejaVu Sans", sans-serif;letter-spacing:0.0px;-webkit-text-stroke:0.15px #fff;line-height:25px;color:#800000;transform:scaleX(1.0146)'>2021-yil </span>
<span class='t' style='left:1413.3px;top:790.00px;font:italic 400 18.67px "Liberation Sans", "DejaVu Sans", sans-serif;letter-spacing:0.161px;-webkit-text-stroke:0.15px #fff;line-height:25px;color:#800000;transform:scaleX(1.0900)'>21-apreldagi </span>
<span class='t' style='left:1541px;top:790.00px;font:italic 400 18.67px "Liberation Sans", "DejaVu Sans", sans-serif;letter-spacing:0.0px;-webkit-text-stroke:0.15px #fff;line-height:25px;color:#800000;transform:scaleX(1.0866)'>OʻRQ-683-sonli </span>
<a class='t' style='left:1693.9px;top:790.00px;font:italic 400 18.67px "Liberation Sans", "DejaVu Sans", sans-serif;letter-spacing:0.7px;-webkit-text-stroke:0.15px #fff;line-height:25px;color:#008080;transform:scaleX(1.0900)'>Qonuni </a>
<span class='t' style='left:497.3px;top:815.00px;font:italic 400 18.67px "Liberation Sans", "DejaVu Sans", sans-serif;letter-spacing:0.647px;-webkit-text-stroke:0.15px #fff;line-height:25px;color:#800000;transform:scaleX(1.0700)'>tahririda — Qonunchilik ma'lumotlari milliy bazasi,</span>
<span class='t' style='left:975.8px;top:815.00px;font:italic 400 18.67px "Liberation Sans", "DejaVu Sans", sans-serif;letter-spacing:0.0px;-webkit-text-stroke:0.15px #fff;line-height:25px;color:#800000;transform:scaleX(1.0187)'>21.04.2021-y., 03/21/683/0375-son)</span>
<span class='t' style='left:560.3px;top:840.00px;font:normal 400 20px "Liberation Sans", "DejaVu Sans", sans-serif;letter-spacing:0.592px;-webkit-text-stroke:0.25px #fff;line-height:26px;color:#000;transform:scaleX(1.0700)'>jinoiy jazoni, boshqa jinoyat-huquqiy ta'sir choralarini ijro etish prinsiplari, tartibi va shartlarini;</span>
<span class='t' style='left:561.2px;top:877.00px;font:normal 400 20px "Liberation Sans", "DejaVu Sans", sans-serif;letter-spacing:1.219px;-webkit-text-stroke:0.25px #fff;line-height:26px;color:#000;transform:scaleX(1.0700)'>mahkumlarning huquqiy maqomini;</span>
<span class='t' style='left:561.2px;top:915.00px;font:normal 400 20px "Liberation Sans", "DejaVu Sans", sans-serif;letter-spacing:0.765px;-webkit-text-stroke:0.25px #fff;line-height:26px;color:#000;transform:scaleX(1.0700)'>mahkumlarni axloqan tuzatish vositalari hamda ularni qoʻllash tartibini;</span>
<span class='t' style='left:561.2px;top:952.00px;font:normal 400 20px "Liberation Sans", "DejaVu Sans", sans-serif;letter-spacing:0.764px;-webkit-text-stroke:0.25px #fff;line-height:26px;color:#000;transform:scaleX(1.0700)'>mahkumlarni jazoni oʻtashdan ozod qilish tartibini;</span>
</main>
<div class="overlay">
<div class="a" style="left:0px;top:177px;width:1897px;height:10px;background:linear-gradient(rgba(0,0,0,.165),rgba(0,0,0,.085) 25%,rgba(0,0,0,.03) 55%,rgba(0,0,0,.008) 80%,rgba(0,0,0,0));"></div>
<svg class="a" style="left:367px;top:177.7px;width:13.2px;height:7.1px;" viewBox="0 0 13 6.800" preserveAspectRatio="none"><path d="M6.500 0L13 6.800H0z" fill="#8b8b8b"/></svg>
</div>
</div>
</body></html>
